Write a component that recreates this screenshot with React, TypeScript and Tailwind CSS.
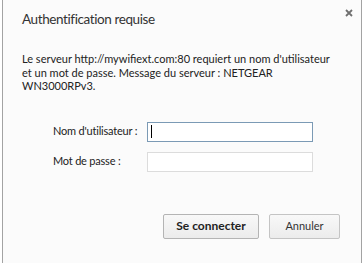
export default function App() {
  return (
    <div className="w-[364px] h-[263px] bg-white" style={{ fontFamily: 'Lato, "Noto Sans", sans-serif' }}>
      <div className="ml-[2px] w-[360px] h-[263px] border-x border-[#a3a3a3] bg-[#fbfbfb] relative">
        <button className="absolute left-[339px] top-[6px] w-[13px] h-[13px] flex items-center justify-center">
          <svg width="8" height="8" viewBox="0 0 8 8">
            <path d="M1 1L7 7M7 1L1 7" stroke="#6f6f6f" strokeWidth="1.8" />
          </svg>
        </button>
        <div className="pl-[19px] pt-[9px] text-[13.5px] leading-[20px] tracking-[-0.4px] text-[#333] whitespace-nowrap">
          Authentification requise
        </div>
        <p className="pl-[19px] mt-[23px] text-[11px] leading-[13.5px] text-[#222] whitespace-nowrap">
          Le serveur http://mywifiext.com:80 requiert un nom d'utilisateur
          <br />
          et un mot de passe. Message du serveur : NETGEAR
          <br />
          WN3000RPv3.
        </p>
        <div className="mt-[29px] flex flex-col gap-[10px]">
          <div className="flex items-center">
            <label className="w-[144px] pl-[50px] text-[11px] tracking-[-0.2px] text-[#222] whitespace-nowrap">Nom d'utilisateur :</label>
            <div className="w-[166px] h-[20px] border border-[#7b9ab5] bg-white flex items-center pl-[3px]">
              <div className="w-[1px] h-[13px] bg-black" />
            </div>
          </div>
          <div className="flex items-center">
            <label className="w-[144px] pl-[50px] text-[11px] tracking-[-0.2px] text-[#222] whitespace-nowrap">Mot de passe :</label>
            <div className="w-[166px] h-[20px] border border-[#dcdcdc] bg-white" />
          </div>
        </div>
        <div className="mt-[42px] flex justify-end gap-[10px] pr-[21px]">
          <button className="w-[96px] h-[25px] border border-[#b4b4b4] rounded-[2px] bg-gradient-to-b from-[#f8f8f8] to-[#ececec] text-[12px] font-bold text-[#222]">
            Se connecter
          </button>
          <button className="w-[71px] h-[25px] border border-[#c4c4c4] rounded-[2px] bg-gradient-to-b from-[#f8f8f8] to-[#ececec] text-[11px] text-[#333]">
            Annuler
          </button>
        </div>
      </div>
    </div>
  );
}
